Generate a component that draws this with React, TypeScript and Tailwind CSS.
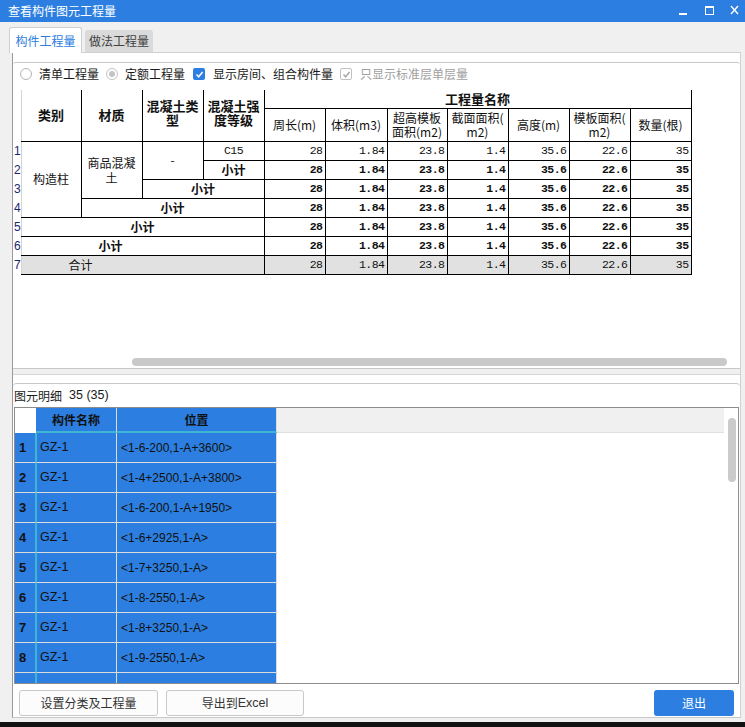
import React from "react";

const BLUE = "bg-[#2c7fe0]";
const cjk = "font-['Noto_Sans_CJK_SC',sans-serif]";
const mono = "font-['Liberation_Mono',monospace] text-[11.5px] tracking-[-0.5px]";
const cell = "border border-black";
const numVals = ["28", "1.84", "23.8", "1.4", "35.6", "22.6", "35"];

function Nums({ bold, gray }: { bold?: boolean; gray?: boolean }) {
  return (
    <>
      {numVals.map((v, i) => (
        <td
          key={i}
          className={`${cell} text-right pr-[2px] leading-none ${mono} ${bold ? "font-bold" : ""} ${gray ? "bg-[#e1e1e1]" : ""}`}
        >
          {v}
        </td>
      ))}
    </>
  );
}

function RowNum({ n }: { n: number }) {
  return (
    <td className="font-['Liberation_Sans',sans-serif] text-[12px] leading-none text-[#1a2470] pl-[1px] overflow-hidden">
      {n}
    </td>
  );
}

function Radio({ dot }: { dot?: boolean }) {
  return (
    <span className={`w-[12px] h-[12px] rounded-full border ${dot ? "border-[#c4c4c4]" : "border-[#b4b4b4]"} bg-white flex items-center justify-center`}>
      {dot && <span className="w-[6px] h-[6px] rounded-full bg-[#c4c4c4]" />}
    </span>
  );
}

function Check({ disabled }: { disabled?: boolean }) {
  return (
    <span
      className={`w-[12px] h-[12px] rounded-[2px] flex items-center justify-center ${
        disabled ? "border border-[#c0c0c0] bg-white" : "bg-[#2c7fe0]"
      }`}
    >
      <svg width="9" height="9" viewBox="0 0 9 9">
        <path
          d="M1.5 4.6 L3.6 6.8 L7.6 2"
          fill="none"
          stroke={disabled ? "#a8a8a8" : "#ffffff"}
          strokeWidth="1.5"
        />
      </svg>
    </span>
  );
}

const positions = [
  "<1-6-200,1-A+3600>",
  "<1-4+2500,1-A+3800>",
  "<1-6-200,1-A+1950>",
  "<1-6+2925,1-A>",
  "<1-7+3250,1-A>",
  "<1-8-2550,1-A>",
  "<1-8+3250,1-A>",
  "<1-9-2550,1-A>",
];

export default function App() {
  return (
    <div className={`w-[745px] h-[727px] bg-[#f0f0f0] flex flex-col overflow-hidden ${cjk}`}>
      {/* Title bar */}
      <div className={`h-[22px] ${BLUE} flex items-center pl-[8px] text-white text-[12px] leading-none`}>
        <span className="flex-1">查看构件图元工程量</span>
        <div className="flex items-center h-full">
          <svg width="26" height="22" viewBox="0 0 26 22">
            <rect x="4" y="13" width="8" height="2" fill="#fff" />
          </svg>
          <svg width="26" height="22" viewBox="0 0 26 22">
            <rect x="4.5" y="6.5" width="8" height="8" fill="none" stroke="#fff" strokeWidth="1" />
            <rect x="4" y="6" width="9" height="2" fill="#fff" />
          </svg>
          <svg width="18" height="22" viewBox="0 0 18 22">
            <path d="M4 6 L11 14 M11 6 L4 14" stroke="#fff" strokeWidth="1.4" />
          </svg>
        </div>
      </div>

      {/* Tabs */}
      <div className="h-[30px] flex items-end pl-[9px] text-[12px] leading-none">
        <div className="relative z-10 -mb-px h-[26px] w-[73px] bg-white border border-b-0 border-[#cfcfcf] rounded-t-[3px] flex items-center justify-center text-[#2b7de0]">
          构件工程量
        </div>
        <div className="ml-[3px] h-[22px] w-[68px] bg-[#dadada] rounded-t-[3px] flex items-center justify-center text-[#404040]">
          做法工程量
        </div>
      </div>

      {/* Panel */}
      <div className="ml-[12px] w-[729px] h-[666px] bg-white border border-l-[#9a9a9a] border-r-[#d0d0d0] border-t-[#cfcfcf] border-b-[#c8c8c8] flex flex-col">
        <div className="h-[9px]" />
        {/* Upper box */}
        <div className="h-[307px] border-t border-b border-[#c8c8c8] rounded-t-[3px] flex flex-col">
          <div className="h-[22px] flex items-center pl-[7px] text-[12px] leading-none text-[#1a1a1a]">
            <Radio />
            <span className="ml-[7px]">清单工程量</span>
            <span className="ml-[7px]">
              <Radio dot />
            </span>
            <span className="ml-[7px]">定额工程量</span>
            <span className="ml-[8px]">
              <Check />
            </span>
            <span className="ml-[8px]">显示房间、组合构件量</span>
            <span className="ml-[7px]">
              <Check disabled />
            </span>
            <span className="ml-[8px] text-[#a0a0a0]">只显示标准层单层量</span>
          </div>
          <div className="flex-1 pt-[5px] overflow-hidden">
            <table className="table-fixed border-collapse w-[678px] text-[#111]">
              <colgroup>
                <col className="w-[8px]" />
                <col className="w-[60px]" />
                <col className="w-[61px]" />
                <col className="w-[61px]" />
                <col className="w-[61px]" />
                <col className="w-[61px]" />
                <col className="w-[62px]" />
                <col className="w-[60px]" />
                <col className="w-[61px]" />
                <col className="w-[61px]" />
                <col className="w-[61px]" />
                <col className="w-[61px]" />
              </colgroup>
              <thead>
                <tr className="h-[18px]">
                  <th className="p-0" />
                  <th rowSpan={2} className="border-l border-l-[#d4d4d4] border-r border-r-black border-b border-b-black text-[13px] leading-[14px] font-bold">
                    类别
                  </th>
                  <th rowSpan={2} className="border-x border-b border-black text-[13px] leading-[14px] font-bold">
                    材质
                  </th>
                  <th rowSpan={2} className="border-x border-b border-black text-[13px] leading-[14px] font-bold pb-[4px]">
                    混凝土类
                    <br />型
                  </th>
                  <th rowSpan={2} className="border-x border-b border-black text-[13px] leading-[14px] font-bold pb-[4px]">
                    混凝土强
                    <br />
                    度等级
                  </th>
                  <th colSpan={7} className="border-x border-b border-black text-[13px] leading-[14px] font-bold pt-[1px]">
                    工程量名称
                  </th>
                </tr>
                <tr className="h-[33px] text-[12px] leading-[14px] font-normal">
                  <th className="p-0" />
                  <th className={`${cell} font-normal`}>周长(m)</th>
                  <th className={`${cell} font-normal`}>体积(m3)</th>
                  <th className={`${cell} font-normal`}>
                    超高模板
                    <br />
                    面积(m2)
                  </th>
                  <th className={`${cell} font-normal`}>
                    截面面积(
                    <br />
                    m2)
                  </th>
                  <th className={`${cell} font-normal`}>高度(m)</th>
                  <th className={`${cell} font-normal`}>
                    模板面积(
                    <br />
                    m2)
                  </th>
                  <th className={`${cell} font-normal`}>数量(根)</th>
                </tr>
              </thead>
              <tbody className="text-[12px] leading-[14px]">
                <tr className="h-[19px]">
                  <RowNum n={1} />
                  <td rowSpan={4} className="border border-black border-l-[#d4d4d4] text-center">
                    构造柱
                  </td>
                  <td rowSpan={3} className={`${cell} text-center leading-[15px]`}>
                    商品混凝
                    <br />土
                  </td>
                  <td rowSpan={2} className={`${cell} text-center`}>
                    -
                  </td>
                  <td className={`${cell} text-center ${mono}`}>C15</td>
                  <Nums />
                </tr>
                <tr className="h-[19px]">
                  <RowNum n={2} />
                  <td className={`${cell} text-center font-bold`}>小计</td>
                  <Nums bold />
                </tr>
                <tr className="h-[19px]">
                  <RowNum n={3} />
                  <td colSpan={2} className={`${cell} text-center font-bold`}>
                    小计
                  </td>
                  <Nums bold />
                </tr>
                <tr className="h-[19px]">
                  <RowNum n={4} />
                  <td colSpan={3} className={`${cell} text-center font-bold`}>
                    小计
                  </td>
                  <Nums bold />
                </tr>
                <tr className="h-[19px]">
                  <RowNum n={5} />
                  <td colSpan={4} className="border border-black border-l-[#d4d4d4] text-center font-bold">
                    小计
                  </td>
                  <Nums bold />
                </tr>
                <tr className="h-[19px]">
                  <RowNum n={6} />
                  <td colSpan={4} className="border border-black border-l-[#d4d4d4] text-left pl-[77px] font-bold">
                    小计
                  </td>
                  <Nums bold />
                </tr>
                <tr className="h-[19px]">
                  <RowNum n={7} />
                  <td colSpan={4} className="border border-black border-l-[#d4d4d4] text-left pl-[47px] bg-[#e1e1e1]">
                    合计
                  </td>
                  <Nums gray />
                </tr>
              </tbody>
            </table>
          </div>
          <div className="h-[8px] ml-[119px] w-[595px] rounded-full bg-[#c9c9c9]" />
          <div className="h-[2px]" />
        </div>

        {/* Splitter */}
        <div className="h-[5px] bg-[#f0f0f0]" />
        <div className="h-[1px] bg-[#d4d4d4]" />
        <div className="h-[8px]" />

        {/* Lower box */}
        <div className="flex-1 border-t border-[#c8c8c8] rounded-t-[4px] flex flex-col">
          <div className="h-[23px] flex items-center pl-[1px] text-[12px] leading-none text-[#1a1a1a]">
            <span>图元明细</span>
            <span className="ml-[7px] font-['Liberation_Sans',sans-serif] text-[12.5px]">35 (35)</span>
          </div>
          <div className="ml-[1px] w-[725px] h-[277px] border border-[#8c8c8c] flex overflow-hidden">
            <div className="flex-1 flex flex-col overflow-hidden">
              {/* header */}
              <div className="h-[25px] flex shrink-0">
                <div className="w-[21px] bg-white" />
                <div className={`w-[81px] ${BLUE} border-r border-r-[#dcdcdc] border-b-2 border-b-[#3fb5d6] flex items-center justify-center text-[12px] font-bold text-[#111] leading-none`}>
                  构件名称
                </div>
                <div className={`w-[160px] ${BLUE} border-r border-r-[#dcdcdc] border-b-2 border-b-[#3fb5d6] flex items-center justify-center text-[12px] font-bold text-[#111] leading-none`}>
                  位置
                </div>
                <div className="flex-1 bg-[#f0f0f0] border-b border-[#e0e0e0]" />
              </div>
              {positions.concat([""]).map((p, i) => (
                <div key={i} className="h-[30px] flex shrink-0">
                  <div className={`w-[22px] ${BLUE} border-r-2 border-r-[#3fb5d6] border-b border-b-[#dcdcdc] flex items-center pl-[4px] font-['Liberation_Sans',sans-serif] font-bold text-[13px] text-[#111] leading-none`}>
                    {p ? i + 1 : ""}
                  </div>
                  <div className={`w-[80px] ${BLUE} border-r border-b border-[#dcdcdc] flex items-center pl-[3px] font-['Liberation_Sans',sans-serif] text-[12.5px] text-[#111] leading-none`}>
                    {p ? "GZ-1" : ""}
                  </div>
                  <div className={`w-[160px] ${BLUE} border-r border-b border-[#dcdcdc] flex items-center pl-[4px] font-['Liberation_Sans',sans-serif] text-[12px] text-[#111] leading-none`}>
                    {p}
                  </div>
                  <div className="flex-1 bg-white" />
                </div>
              ))}
            </div>
            <div className="w-[14px] bg-white pt-[10px] pl-[4px]">
              <div className="w-[8px] h-[64px] rounded-full bg-[#cbcbcb]" />
            </div>
          </div>
          <div className="flex-1 flex items-start pt-[6px] pl-[6px] text-[12px] leading-none">
            <button className="w-[139px] h-[26px] rounded-[3px] border border-[#c8c8c8] bg-[#fcfcfc] text-[#333] flex items-center justify-center">
              设置分类及工程量
            </button>
            <button className="ml-[8px] w-[138px] h-[26px] rounded-[3px] border border-[#c8c8c8] bg-[#fcfcfc] text-[#333] flex items-center justify-center">
              导出到<span className="font-['Liberation_Sans',sans-serif] text-[12.5px]">Excel</span>
            </button>
            <div className="flex-1" />
            <button className={`mr-[6px] w-[80px] h-[26px] rounded-[3px] ${BLUE} text-white flex items-center justify-center`}>
              退出
            </button>
          </div>
        </div>
      </div>
      <div className="h-[4px]" />
      <div className="h-[5px] bg-[#111]" />
    </div>
  );
}
